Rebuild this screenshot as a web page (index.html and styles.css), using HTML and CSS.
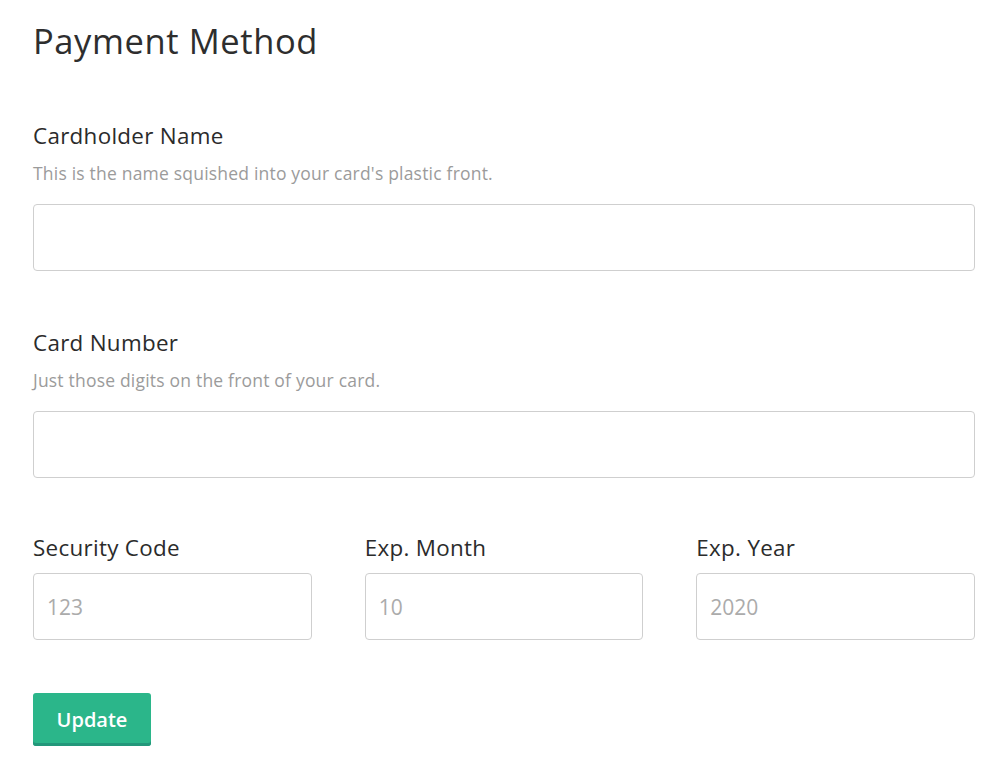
FILE: index.html
```html
<!DOCTYPE html>
<html lang="en">
<head>
<meta charset="utf-8">
<title>Payment Method</title>
<link rel="stylesheet" href="styles.css">
</head>
<body>
<main class="page">
  <h1 class="title">Payment Method</h1>
  <form class="form">
    <div class="field">
      <label class="label" for="name">Cardholder Name</label>
      <p class="hint">This is the name squished into your card's plastic front.</p>
      <input class="input" id="name" type="text">
    </div>
    <div class="field">
      <label class="label" for="number">Card Number</label>
      <p class="hint">Just those digits on the front of your card.</p>
      <input class="input" id="number" type="text">
    </div>
    <div class="row">
      <div class="field field--compact">
        <label class="label" for="cvc">Security Code</label>
        <input class="input" id="cvc" type="text" placeholder="123">
      </div>
      <div class="field field--compact">
        <label class="label" for="month">Exp. Month</label>
        <input class="input" id="month" type="text" placeholder="10">
      </div>
      <div class="field field--compact">
        <label class="label" for="year">Exp. Year</label>
        <input class="input" id="year" type="text" placeholder="2020">
      </div>
    </div>
    <button class="button" type="button">Update</button>
  </form>
</main>
</body>
</html>
```
FILE: styles.css
```css
html, body {
  margin: 0;
  padding: 0;
  background: #fff;
}

body {
  font-family: "Open Sans", "Noto Sans", sans-serif;
  color: #2b2b2b;
}

.page {
  width: 942px;
  padding: 17px 0 0 33px;
}

.title {
  margin: 0;
  font-size: 34.5px;
  font-weight: 400;
  line-height: 48px;
  color: #2e2e2e;
  letter-spacing: 0.6px;
}

.form {
  display: flex;
  flex-direction: column;
  margin-top: 56px;
}

.field {
  display: flex;
  flex-direction: column;
  margin-bottom: 57px;
}

.label {
  font-size: 22.4px;
  line-height: 30px;
  color: #2b2b2b;
  letter-spacing: 0.3px;
}

.hint {
  margin: 10px 0 19px;
  font-size: 17.5px;
  line-height: 24px;
  color: #9b9b9b;
  letter-spacing: 0.2px;
}

.input {
  box-sizing: border-box;
  height: 67px;
  width: 100%;
  margin: 0;
  padding: 0 13px;
  border: 1px solid #cfcfcf;
  border-radius: 4px;
  font-family: inherit;
  font-size: 21px;
  color: #333;
  background: #fff;
  outline: none;
}

.input::placeholder {
  color: #ababab;
}

.row {
  display: grid;
  grid-template-columns: repeat(3, 1fr);
  column-gap: 53px;
  margin-top: -2px;
}

.field--compact {
  margin-bottom: 53px;
}

.field--compact .label {
  margin-bottom: 10px;
}

.button {
  align-self: flex-start;
  width: 118px;
  height: 53px;
  border: none;
  border-radius: 3px;
  background: #2bb68a;
  box-shadow: inset 0 -3px 0 #23977a;
  color: #fff;
  font-family: inherit;
  font-size: 20px;
  font-weight: 600;
  cursor: pointer;
}
```
